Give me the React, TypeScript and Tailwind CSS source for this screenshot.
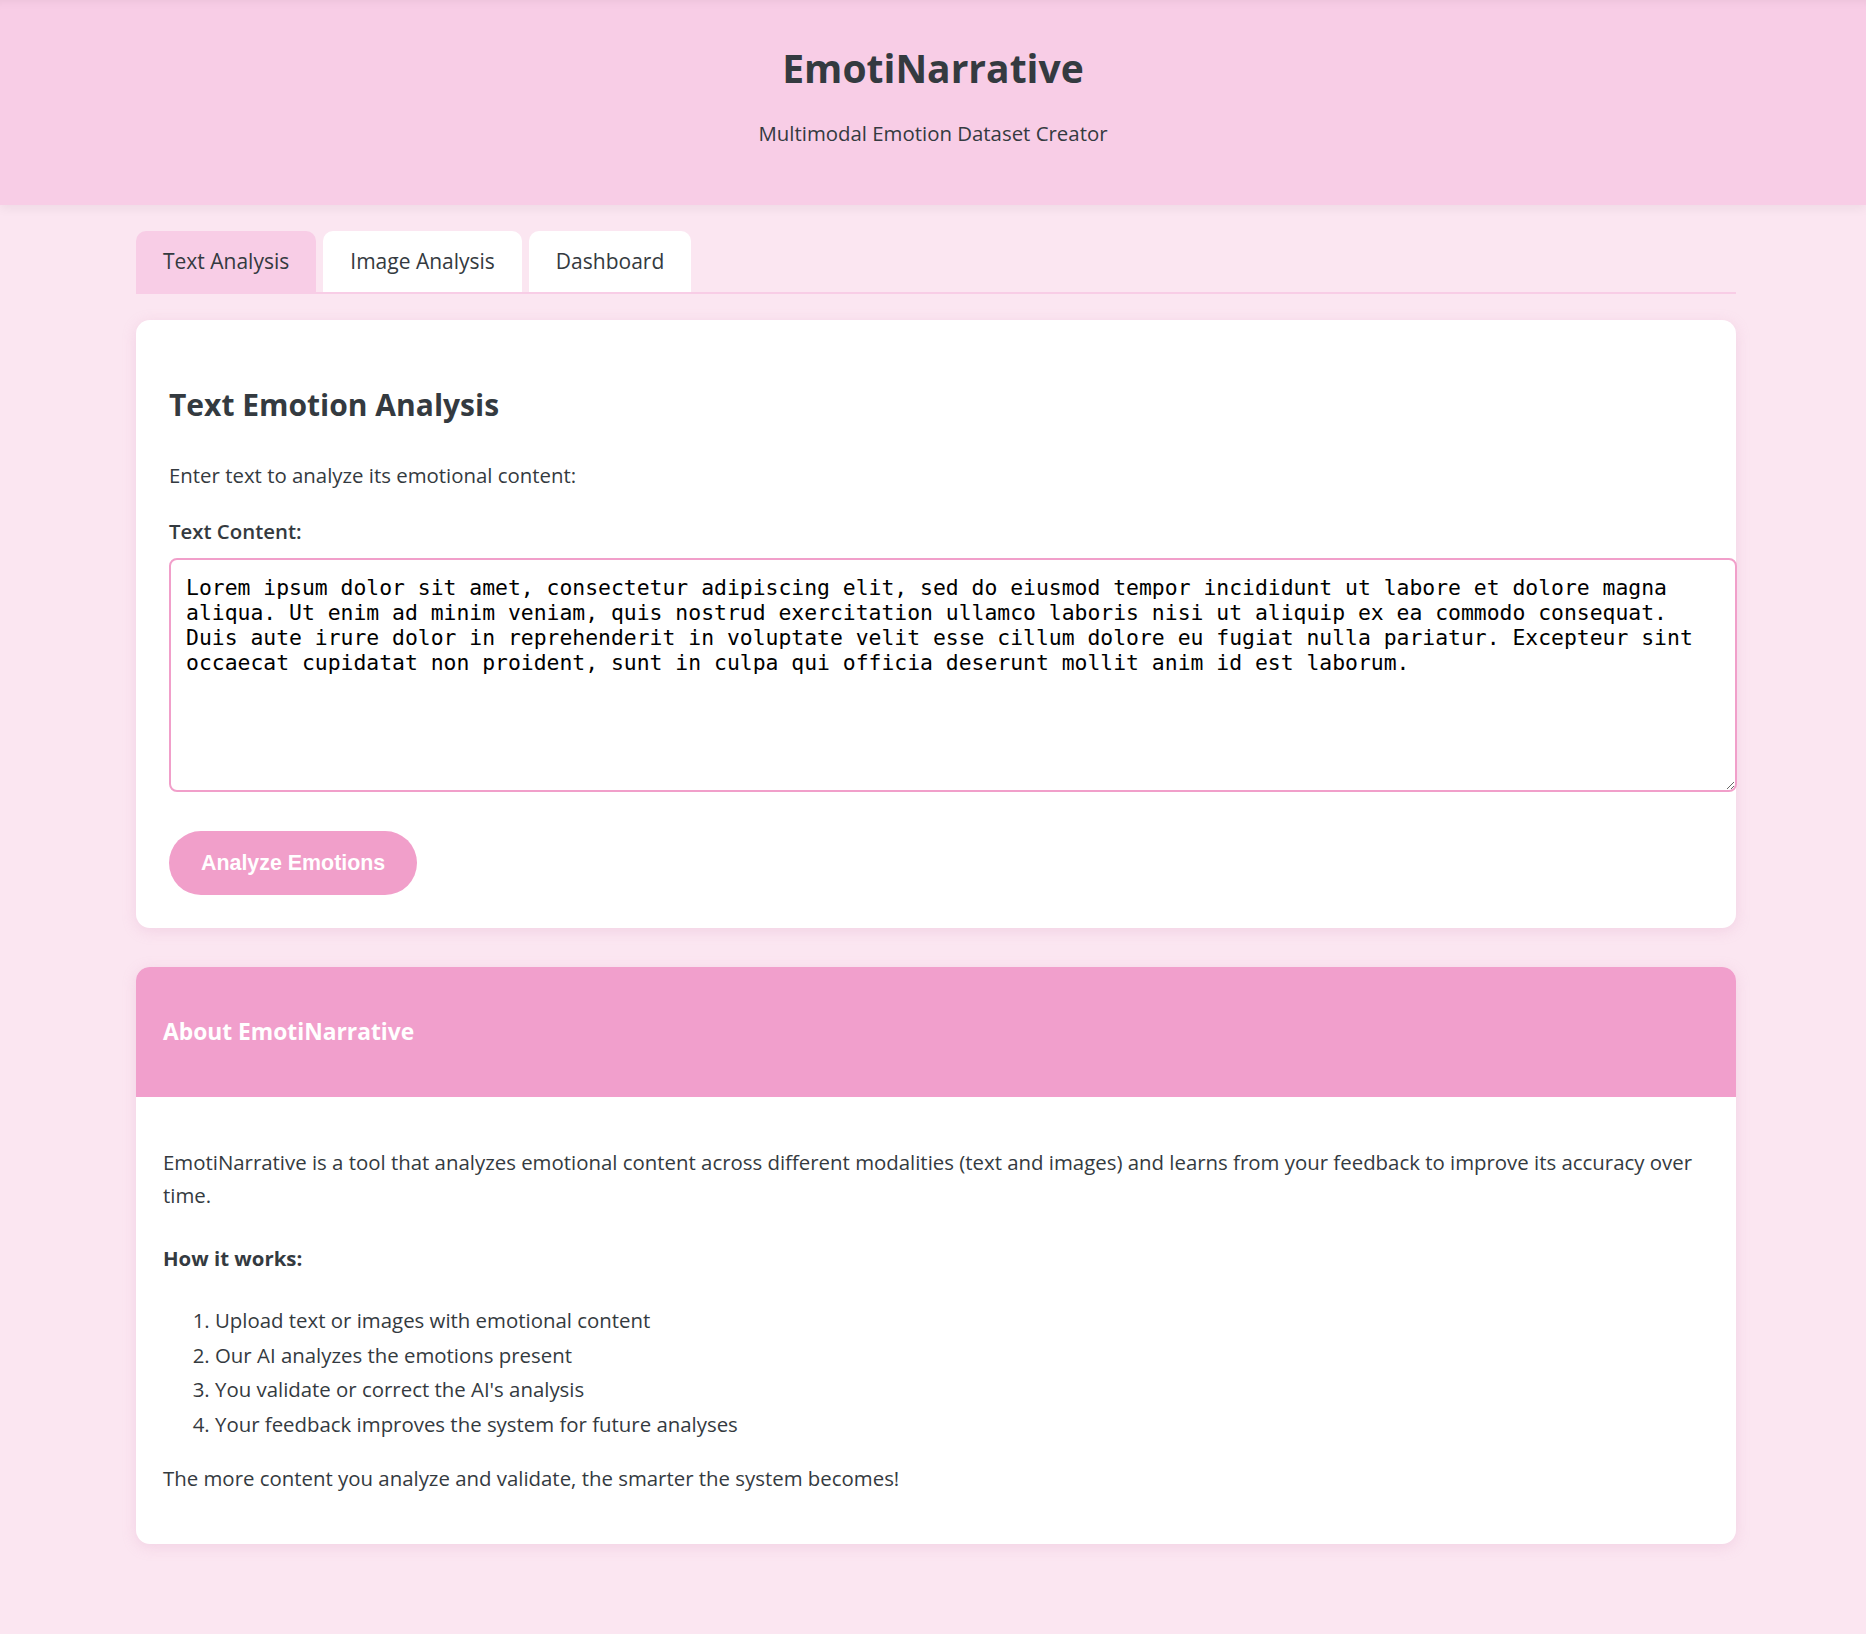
import { useState } from 'react';

const loremText =
    'Lorem ipsum dolor sit amet, consectetur adipiscing elit, sed do eiusmod tempor incididunt ut labore et dolore magna aliqua. Ut enim ad minim veniam, quis nostrud exercitation ullamco laboris nisi ut aliquip ex ea commodo consequat. Duis aute irure dolor in reprehenderit in voluptate velit esse cillum dolore eu fugiat nulla pariatur. Excepteur sint occaecat cupidatat non proident, sunt in culpa qui officia deserunt mollit anim id est laborum.';

const tabs = ['Text Analysis', 'Image Analysis', 'Dashboard'];

const steps = [
    'Upload text or images with emotional content',
    'Our AI analyzes the emotions present',
    "You validate or correct the AI's analysis",
    'Your feedback improves the system for future analyses',
];

export default function App() {
    const [activeTab, setActiveTab] = useState<string>('Text Analysis');
    const [text, setText] = useState<string>(loremText);

    return (
        <div className="min-h-screen bg-[#fbe6f1] text-[#343a40] font-['Open_Sans','Noto_Sans',sans-serif] text-[20.4px] pb-[89px]">
            {/* Header */}
            <header className="bg-[#f8cde6] pt-[44px] pb-[57px] text-center shadow-[0_4px_10px_rgba(0,0,0,0.05),inset_0_10px_10px_-8px_rgba(0,0,0,0.05)]">
                <h1 className="text-[39px] leading-[48px] font-bold">EmotiNarrative</h1>
                <p className="mt-[26px] leading-[30px]">Multimodal Emotion Dataset Creator</p>
            </header>

            <main className="max-w-[1606px] mx-auto pl-[6px]">
                {/* Tabs */}
                <div className="mt-[26px] flex gap-[7px] border-b-2 border-[#f8cde6]">
                    {tabs.map((tab) => (
                        <button
                            key={tab}
                            onClick={() => setActiveTab(tab)}
                            className={`h-[61px] px-[27px] rounded-t-[10px] text-[21px] ${
                                activeTab === tab ? 'bg-[#f8cde6]' : 'bg-white'
                            }`}
                        >
                            {tab}
                        </button>
                    ))}
                </div>

                {/* Text analysis card */}
                <section className="mt-[26px] bg-white rounded-[14px] px-[33px] pt-[68px] pb-[33px] shadow-[0_3px_14px_rgba(220,150,190,0.25)]">
                    <h2 className="text-[30px] leading-[34px] font-bold">Text Emotion Analysis</h2>
                    <p className="mt-[38px] leading-[30px]">Enter text to analyze its emotional content:</p>
                    <label className="block mt-[26px] leading-[30px] font-semibold">Text Content:</label>
                    <textarea
                        value={text}
                        onChange={(e) => setText(e.target.value)}
                        className="mt-[12px] block w-full h-[200px] box-content p-[15px] border-2 border-[#f19fca] rounded-[8px] font-['DejaVu_Sans_Mono',monospace] text-[21.4px] leading-[25px] text-black outline-none"
                    />
                    <button className="mt-[39px] h-[64px] px-[32px] rounded-full bg-[#f19fca] text-white font-['Liberation_Sans',Arial,sans-serif] font-bold text-[21.4px]">
                        Analyze Emotions
                    </button>
                </section>

                {/* About card */}
                <section className="mt-[39px] bg-white rounded-[14px] overflow-hidden shadow-[0_3px_14px_rgba(220,150,190,0.25)]">
                    <div className="h-[130px] px-[27px] flex items-center bg-[#f19fcc]">
                        <h3 className="text-[22.8px] font-bold text-white">About EmotiNarrative</h3>
                    </div>
                    <div className="px-[27px] pt-[49px] pb-[49px]">
                        <p className="leading-[33px]">
                            EmotiNarrative is a tool that analyzes emotional content across different modalities (text and images) and learns from your feedback to improve its accuracy over time.
                        </p>
                        <p className="mt-[30px] leading-[33px] font-bold">How it works:</p>
                        <ol className="mt-[28px] list-decimal pl-[52px]">
                            {steps.map((step) => (
                                <li key={step} className="leading-[34.5px]">
                                    {step}
                                </li>
                            ))}
                        </ol>
                        <p className="mt-[21px] leading-[33px]">The more content you analyze and validate, the smarter the system becomes!</p>
                    </div>
                </section>
            </main>
        </div>
    );
}
